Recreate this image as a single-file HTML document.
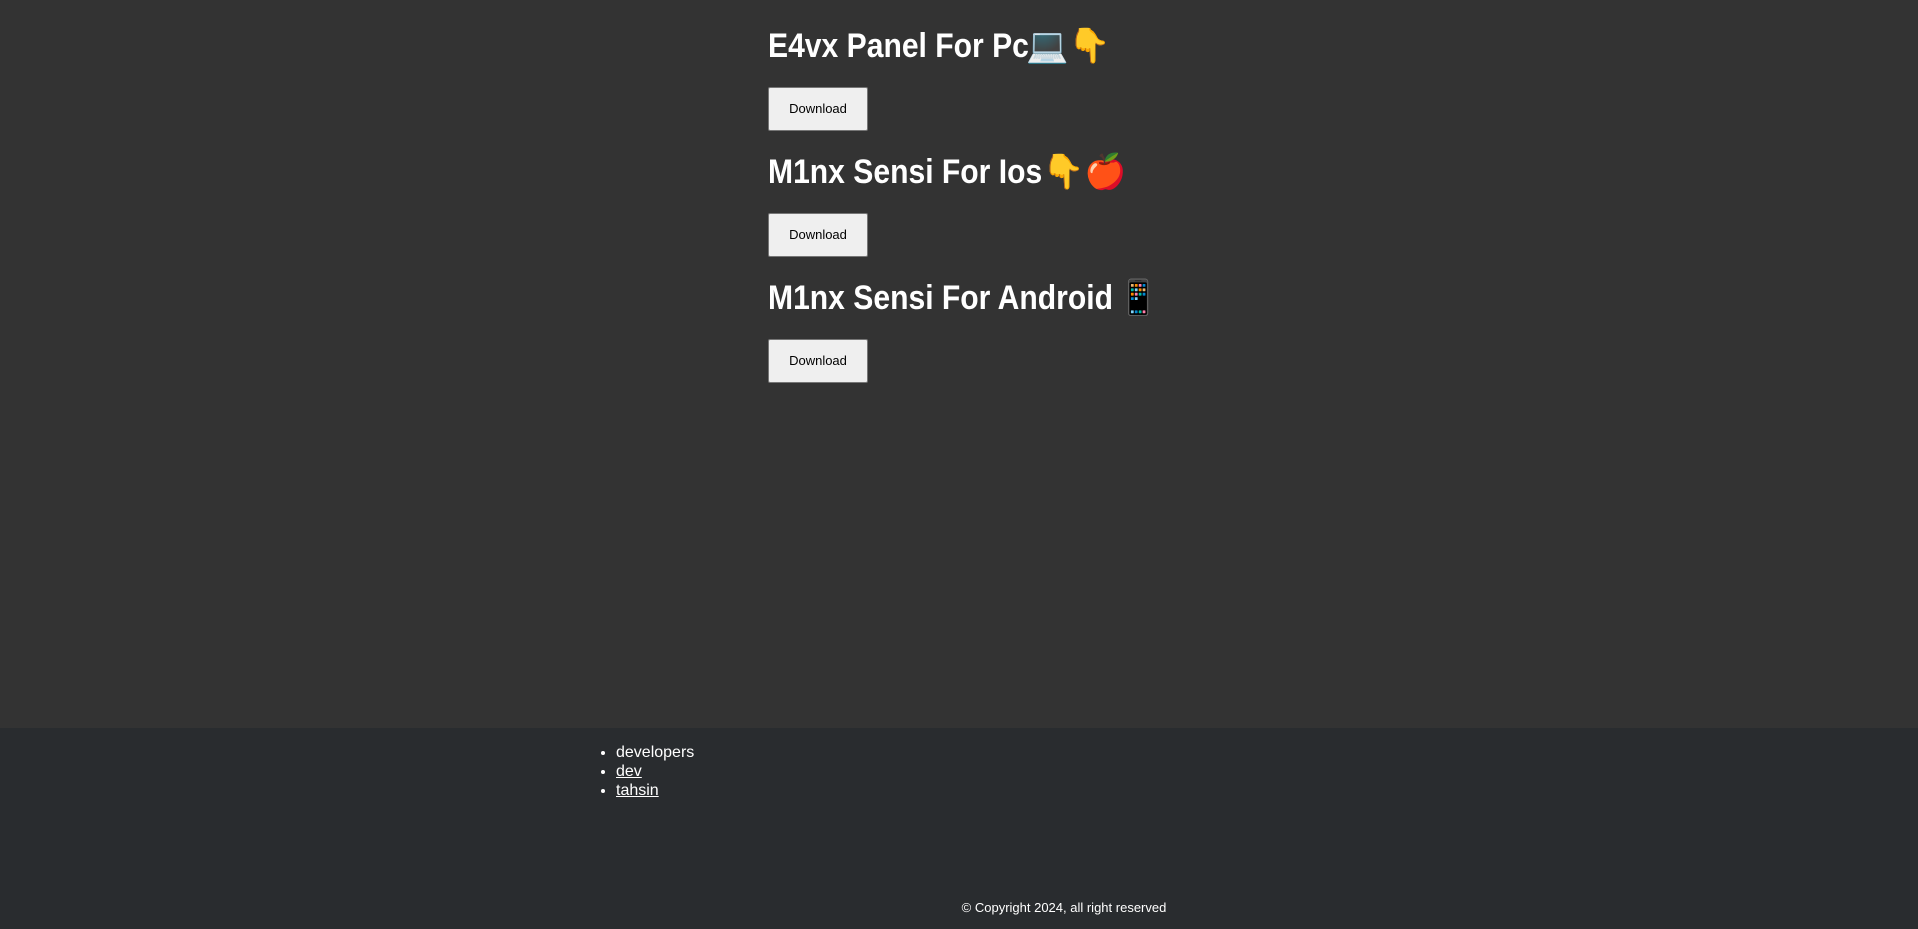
<!DOCTYPE html>
<html><head><meta charset="utf-8"><style>
html,body{margin:0;padding:0;width:1918px;height:929px;overflow:hidden;background:#333333;font-family:"Liberation Sans",sans-serif}
h1{position:absolute;left:768px;margin:0;color:#fff;font-size:34px;font-weight:bold;line-height:40px;white-space:nowrap;width:600px}
h1 .t{display:inline-block;transform:scaleX(0.885);transform-origin:left center}
h1 .e{position:absolute;top:0}
.b{position:absolute;left:768px;width:100px;height:44px;box-sizing:border-box;background:#efefef;border:1px solid #767676;border-radius:2px;font-size:13px;color:#000;text-align:center;line-height:42px}
footer{position:absolute;left:0;top:728px;width:1918px;height:201px;background:#292c2f;color:#fff}
ul{position:absolute;left:576px;top:15px;margin:0;padding-left:40px;font-size:16px;line-height:19px}
a{color:#fff}
.c{position:absolute;left:0;width:1918px;top:172px;text-align:center;font-size:13px;padding-left:210px;box-sizing:border-box}
</style></head><body>
<h1 style="top:26px"><span class="t">E4vx Panel For Pc</span><span class="e" style="left:258px">💻👇</span></h1>
<div class="b" style="top:87px">Download</div>
<h1 style="top:152px"><span class="t">M1nx Sensi For Ios</span><span class="e" style="left:274px">👇🍎</span></h1>
<div class="b" style="top:213px">Download</div>
<h1 style="top:278px"><span class="t">M1nx Sensi For Android</span><span class="e" style="left:349px">📱</span></h1>
<div class="b" style="top:339px">Download</div>
<footer>
<ul><li>developers</li><li><a href="#">dev</a></li><li><a href="#">tahsin</a></li></ul>
<div class="c">© Copyright 2024, all right reserved</div>
</footer>
</body></html>
